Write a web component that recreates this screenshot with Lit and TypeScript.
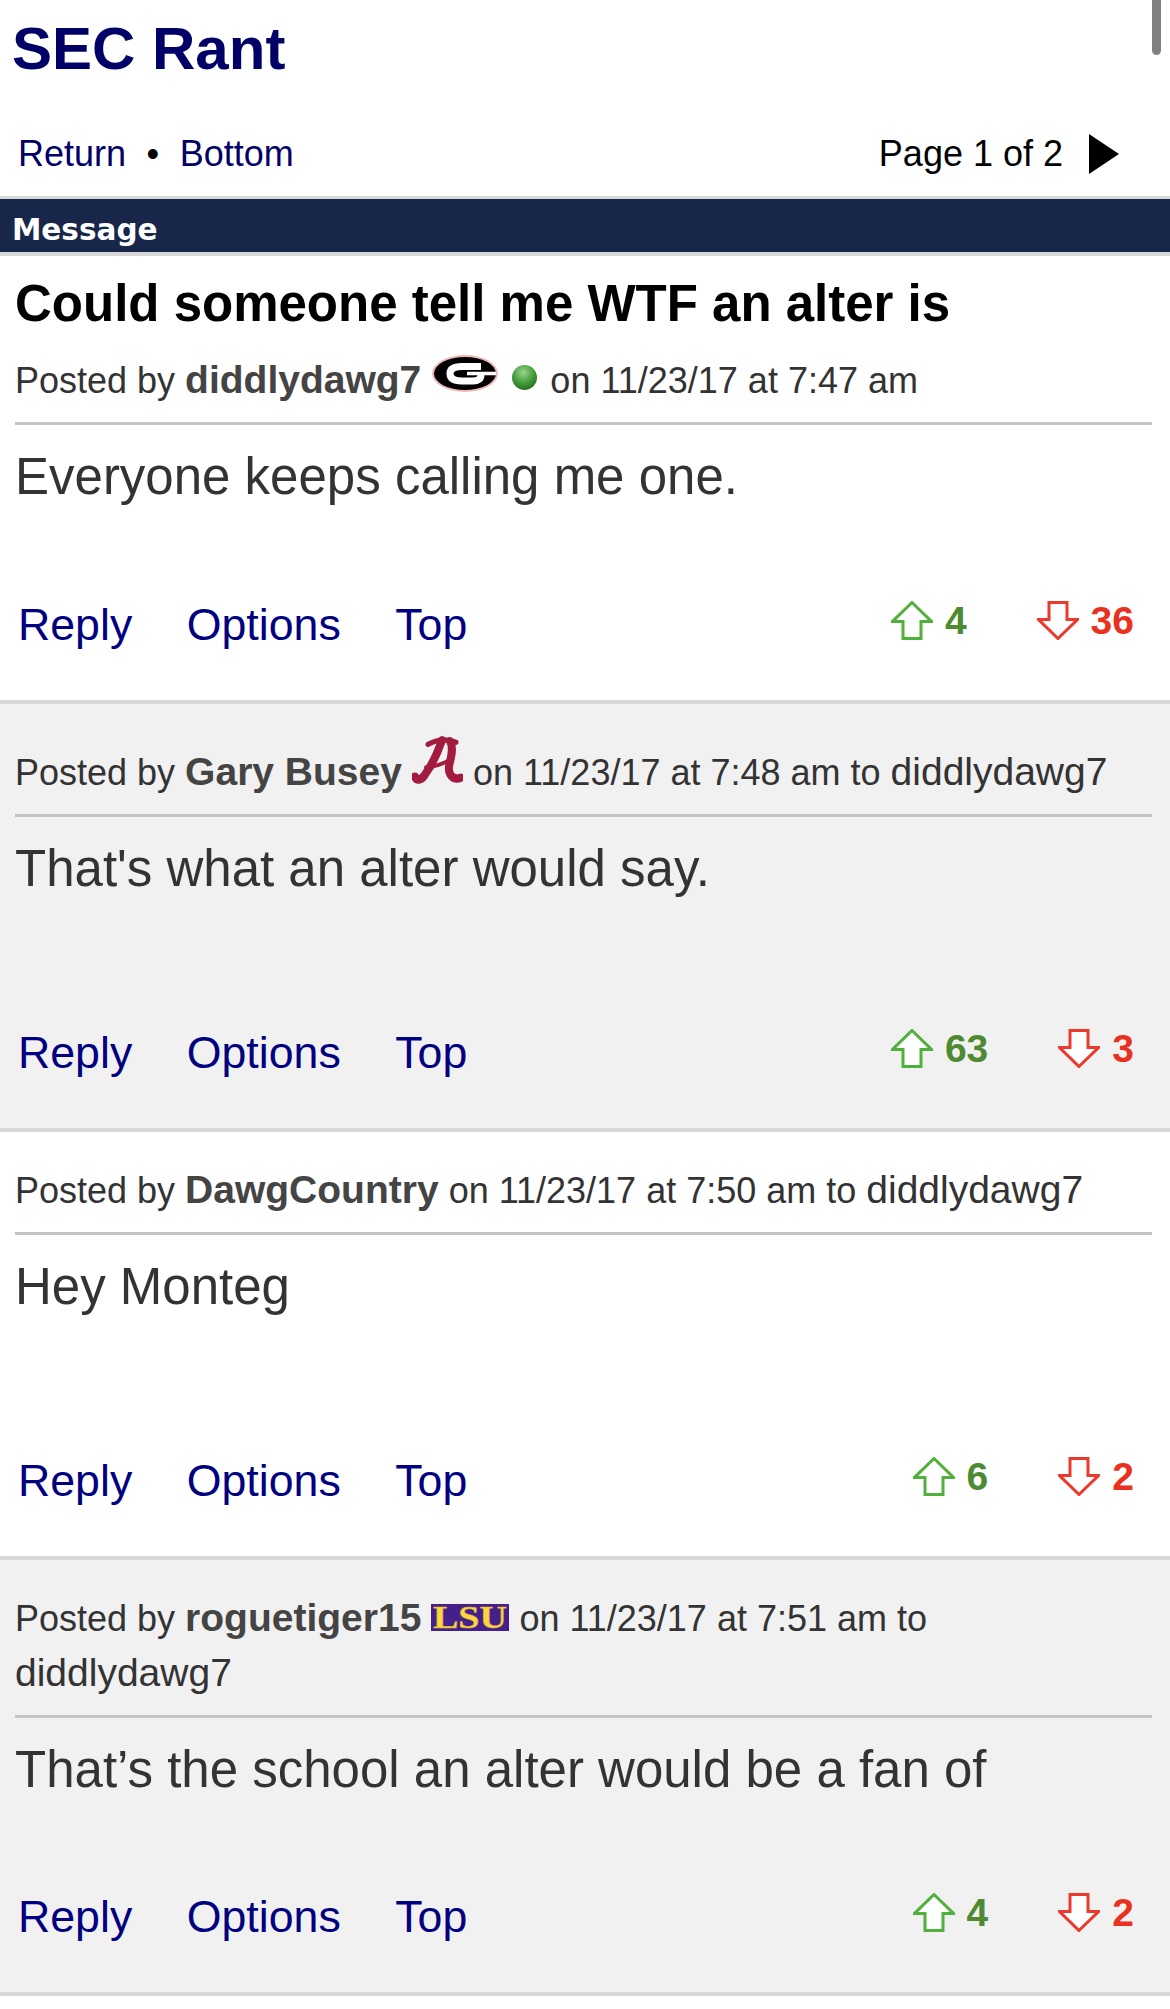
import { LitElement, html, css, TemplateResult } from "lit";
import { customElement } from "lit/decorators.js";

const gLogo = html`<svg class="logo g" width="68" height="39" viewBox="0 0 68 39"><g filter="url(#soft)"><ellipse cx="34" cy="19.5" rx="33" ry="18.500" fill="#f0b8b8"/><ellipse cx="34" cy="19.5" rx="31" ry="16.500" fill="#050505"/><path d="M50 12.500H31C22 12.500 19 15.5 19 19.5C19 24 22 27 31 27H42C47 27 50 25 50 21" fill="none" stroke="#fff" stroke-width="7"/><path d="M36 19.500H65" stroke="#fff" stroke-width="3.500"/></g></svg>`;
const dot = html`<svg class="logo dot" width="25" height="25" viewBox="0 0 25 25"><defs><radialGradient id="ball" cx="0.45" cy="0.3" r="0.75"><stop offset="0" stop-color="#9ad58c"/><stop offset="0.55" stop-color="#469c3c"/><stop offset="1" stop-color="#1f6a1c"/></radialGradient></defs><circle cx="12.500" cy="12.500" r="12.500" fill="url(#ball)"/></svg>`;
const aLogo = html`<svg class="logo" width="51" height="50" viewBox="0 0 51 48" preserveAspectRatio="none"><g filter="url(#soft)" fill="none" stroke="#a31f3f" stroke-linecap="round"><path d="M30 5C26 16 19 30 13 38C9 44 4 44 3 40" stroke-width="8"/><path d="M16 9C24 5 34 3 44 7" stroke-width="5"/><path d="M38 6C42 12 39 22 37 30C36 38 41 44 49 41" stroke-width="8"/><path d="M14 31C22 31 30 28 38 24" stroke-width="4"/><path d="M27 10L24 24" stroke-width="3"/></g></svg>`;
const lsuLogo = html`<svg class="logo lsu" width="78" height="27" viewBox="0 0 78 27"><rect width="78" height="27" fill="#46208a"/><text x="39" y="23.500" text-anchor="middle" textLength="74" lengthAdjust="spacingAndGlyphs" font-family="'Liberation Serif', serif" font-weight="700" font-size="31" fill="#fbd640" stroke="#d9ae3a" stroke-width="0.500">LSU</text></svg>`;

const upArrow = html`<svg width="42" height="39" viewBox="0 0 42 39"><path d="M21 1.500L40.500 20.500H30V37.500H12V20.500H1.500Z" fill="#fff" stroke="#4fb03a" stroke-width="3"/></svg>`;
const downArrow = html`<svg width="42" height="39" viewBox="0 0 42 39"><path d="M21 37.500L40.500 18.500H30V1.500H12V18.500H1.500Z" fill="#fff" stroke="#ea3a2c" stroke-width="3"/></svg>`;

interface Post {
  title?: string;
  name: string;
  icons: TemplateResult[];
  after: string;
  to?: string;
  text: string;
  up: number;
  down: number;
}

const posts: Post[] = [
  { title: "Could someone tell me WTF an alter is", name: "diddlydawg7", icons: [gLogo, dot], after: "on 11/23/17 at 7:47 am", text: "Everyone keeps calling me one.", up: 4, down: 36 },
  { name: "Gary Busey", icons: [aLogo], after: "on 11/23/17 at 7:48 am to", to: "diddlydawg7", text: "That's what an alter would say.", up: 63, down: 3 },
  { name: "DawgCountry", icons: [], after: "on 11/23/17 at 7:50 am to", to: "diddlydawg7", text: "Hey Monteg", up: 6, down: 2 },
  { name: "roguetiger15", icons: [lsuLogo], after: "on 11/23/17 at 7:51 am to", to: "diddlydawg7", text: "That’s the school an alter would be a fan of", up: 4, down: 2 },
];

@customElement("app-root")
export class AppRoot extends LitElement {
  static styles = css`
    :host {
      display: block;
      position: relative;
      height: 2009px;
      overflow: hidden;
      background: #fff;
      font-family: "Liberation Sans", Arial, sans-serif;
      color: #333;
    }
    a { color: #000080; text-decoration: none; }
    .scroll {
      position: absolute;
      top: -10px;
      right: 9px;
      width: 9px;
      height: 65px;
      border-radius: 5px;
      background: #808080;
    }
    h1 {
      margin: 0;
      padding-left: 12px;
      font-size: 60px;
      line-height: 98px;
      font-weight: 700;
      color: #000066;
    }
    .nav {
      display: flex;
      align-items: center;
      height: 54px;
      padding: 29px 51px 15px 18px;
      font-size: 36px;
      line-height: 54px;
      color: #000;
    }
    .nav a { color: #000066; }
    .bullet { margin: 0 20.500px; }
    .page { margin-left: auto; }
    .tri {
      width: 0;
      height: 0;
      margin-left: 26px;
      border-left: 30px solid #000;
      border-top: 20px solid transparent;
      border-bottom: 20px solid transparent;
    }
    .bar {
      box-sizing: border-box;
      border-top: 3px solid #d8d8d8;
      border-bottom: 4px solid #d8d8d8;
      background: #18264a;
      color: #fff;
      padding: 10px 0 0 12px;
      font-family: "DejaVu Sans", Verdana, sans-serif;
      font-weight: 700;
      font-size: 29.500px;
      line-height: 43px;
      height: 60px;
    }
    .post {
      box-sizing: border-box;
      display: flex;
      flex-direction: column;
      min-height: 428px;
      border-bottom: 4px solid #d8d8d8;
      padding-top: 31px;
    }
    .post.first { padding-top: 18px; }
    .post.alt { background: #f1f1f1; }
    h2 {
      margin: 0 18px 19px 15px;
      font-size: 51px;
      line-height: 60px;
      font-weight: 700;
      color: #000;
    }
    .meta {
      margin: 0 18px 0 15px;
      padding: 0 30px 14px 0;
      border-bottom: 3px solid #c4c4c4;
      font-size: 36px;
      line-height: 54px;
    }
    .meta b { color: #444; font-size: 39px; }
    .to { font-size: 39px; }
    .logo { vertical-align: baseline; }
    .lsu { overflow: visible; }
    .dot { margin: 0 3px; vertical-align: 3px; }
    .text {
      box-sizing: border-box;
      min-height: 172px;
      padding: 22px 18px 0 15px;
      font-size: 51px;
      line-height: 60px;
    }
    .first .text { min-height: 173px; }
    .actions {
      display: flex;
      margin-top: auto;
      height: 102px;
      padding: 0 36px 0 18px;
      font-size: 44.700px;
      line-height: 54px;
      box-sizing: border-box;
    }
    .links { display: flex; gap: 54.500px; }
    .votes {
      display: flex;
      gap: 70px;
      margin-left: auto;
      margin-top: 3px;
      height: 39px;
      font-size: 39px;
      line-height: 39px;
      font-weight: 700;
    }
    .vote { display: flex; gap: 12px; }
    .up { color: #4e8a32; }
    .down { color: #e8321f; }
    .defs { position: absolute; width: 0; height: 0; }
  `;

  private renderPost(p: Post, i: number) {
    return html`
      <article class="post ${i === 0 ? "first" : ""} ${i % 2 ? "alt" : ""}">
        ${p.title ? html`<h2>${p.title}</h2>` : ""}
        <div class="meta">Posted by <b>${p.name}</b> ${p.icons.map((ic) => html`${ic} `)}<span>${p.after}</span>${p.to ? html` <span class="to">${p.to}</span>` : ""}</div>
        <div class="text">${p.text}</div>
        <div class="actions">
          <div class="links"><a>Reply</a><a>Options</a><a>Top</a></div>
          <div class="votes">
            <span class="vote up">${upArrow}${p.up}</span>
            <span class="vote down">${downArrow}${p.down}</span>
          </div>
        </div>
      </article>
    `;
  }

  render() {
    return html`
      <svg class="defs"><filter id="soft"><feGaussianBlur stdDeviation="0.6"/></filter></svg>
      <h1>SEC Rant</h1>
      <div class="nav">
        <a>Return</a><span class="bullet">•</span><a>Bottom</a>
        <span class="page">Page 1 of 2</span><span class="tri"></span>
      </div>
      <div class="bar">Message</div>
      ${posts.map((p, i) => this.renderPost(p, i))}
      <div class="scroll"></div>
    `;
  }
}
